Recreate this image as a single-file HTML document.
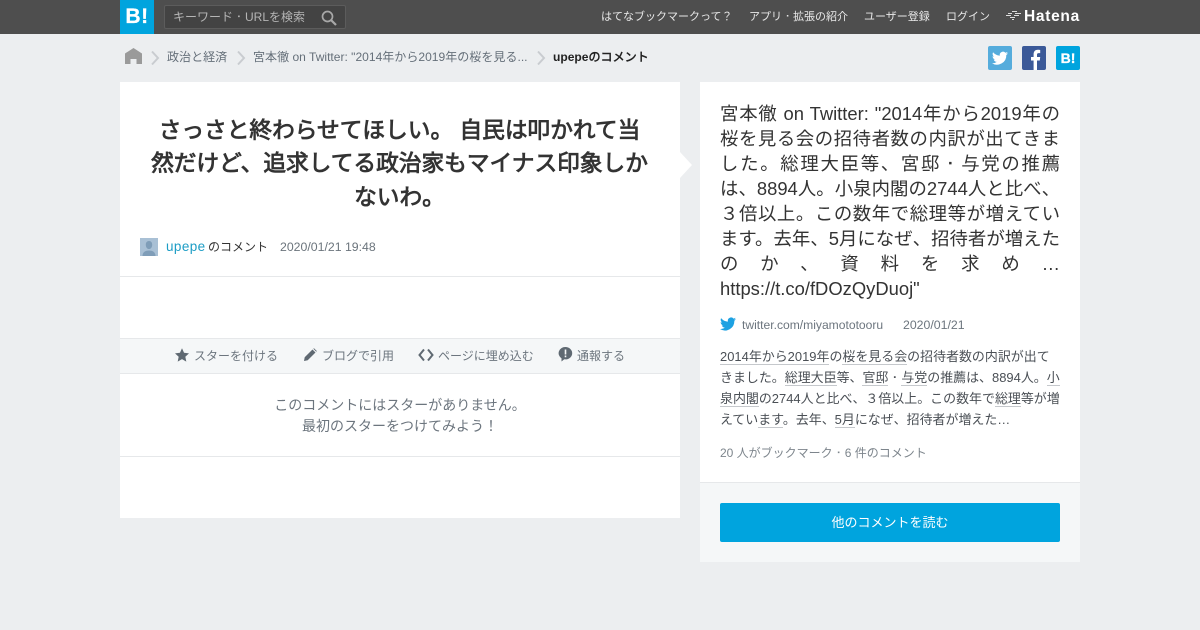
<!DOCTYPE html>
<html lang="ja"><head><meta charset="utf-8"><title>upepeのコメント</title>
<style>
*{box-sizing:border-box}
html,body{margin:0;padding:0}
body{width:1200px;height:630px;overflow:hidden;background:#eceef0;position:relative;font-family:"Liberation Sans","WenQuanYi Zen Hei",sans-serif;color:#333}
.a{position:absolute;white-space:nowrap}
.d{font-family:"IPAGothic",sans-serif;line-height:0}
#top{left:0;top:0;width:1200px;height:34px;background:#4e4e4e}
.nav{top:10px;font-size:11px;line-height:15px;color:#e8e8e8}
.bc{top:49px;font-size:12.050px;line-height:16px;color:#656f79}
.u{border-bottom:1px solid #c5c8cc}
.act{top:348px;font-size:12px;line-height:16px;color:#6c757e}
</style></head><body>
<div class="a" id="top"></div>
<div class="a" style="left:120px;top:0;width:34px;height:34px;background:#00a4de;color:#fff;font-weight:bold;font-size:21px;line-height:34px;text-align:center;letter-spacing:.5px;-webkit-text-stroke:.25px #fff">B!</div>
<div class="a" style="left:164px;top:5px;width:182px;height:24px;background:#434343;border:1px solid #5c5c5c;border-radius:2px"></div>
<div class="a" style="left:173px;top:9px;font-size:12px;line-height:16px;color:#b5b5b5">キーワード<span class="d">・</span>URLを検索</div>
<svg class="a" style="left:320px;top:9px" width="18" height="18" viewBox="0 0 18 18" fill="none" stroke="#a8a8a8" stroke-width="1.7"><circle cx="7.5" cy="7.5" r="5"/><path d="M11 11l5 5" stroke-width="2.2"/></svg>
<div class="a nav" style="left:601px">はてなブックマークって？</div>
<div class="a nav" style="left:749px">アプリ<span class="d">・</span>拡張の紹介</div>
<div class="a nav" style="left:864px">ユーザー登録</div>
<div class="a nav" style="left:946px">ログイン</div>
<svg class="a" style="left:1006px;top:10px" width="16" height="11" viewBox="0 0 16 11" fill="none" stroke="#ddd" stroke-width="1"><path d="M6 1.500h5M2 3.500h4M9 3.500h6M0 5.500h5M8 5.500h5M4 7.500h5M6 9.500h2"/></svg>
<div class="a" style="left:1024px;top:7px;font-size:15.500px;line-height:20px;font-weight:bold;color:#fff;letter-spacing:.7px">Hatena</div>

<svg class="a" style="left:125px;top:48px" width="17" height="16" viewBox="0 0 17 16" fill="#9a9a9a"><path d="M8.500 0L0 5.500V16h5.500v-5h6v5H17V5.500z"/></svg>
<svg class="a" style="left:150px;top:50px" width="10" height="16" viewBox="0 0 10 16" fill="none" stroke="#c9ccd0" stroke-width="2"><path d="M2 1.500l6 6.500-6 6.500"/></svg>
<div class="a bc" style="left:167px">政治と経済</div>
<svg class="a" style="left:236px;top:50px" width="10" height="16" viewBox="0 0 10 16" fill="none" stroke="#c9ccd0" stroke-width="2"><path d="M2 1.500l6 6.500-6 6.500"/></svg>
<div class="a bc" style="left:253px">宮本徹 on Twitter: "2014年から2019年の桜を見る...</div>
<svg class="a" style="left:536px;top:50px" width="10" height="16" viewBox="0 0 10 16" fill="none" stroke="#c9ccd0" stroke-width="2"><path d="M2 1.500l6 6.500-6 6.500"/></svg>
<div class="a bc" style="left:553px;font-weight:bold;color:#222">upepeのコメント</div>

<svg class="a" style="left:988px;top:46px" width="24" height="24" viewBox="0 0 24 24"><rect width="24" height="24" rx="2" fill="#55acdc"/><path fill="#fff" d="M20 7.200c-.6.300-1.200.400-1.900.500.700-.400 1.200-1 1.400-1.800-.600.400-1.300.600-2.100.800a3.300 3.300 0 0 0-5.600 3c-2.700-.100-5.100-1.400-6.700-3.400-.900 1.500-.400 3.400 1 4.400-.500 0-1-.200-1.500-.400 0 1.600 1.100 3 2.600 3.300-.500.100-1 .100-1.500 0 .400 1.300 1.600 2.200 3.100 2.300A6.600 6.600 0 0 1 4 17.200 9.300 9.300 0 0 0 18.300 9c.700-.500 1.300-1.100 1.700-1.800z"/></svg>
<svg class="a" style="left:1022px;top:46px" width="24" height="24" viewBox="0 0 24 24"><rect width="24" height="24" rx="2" fill="#3b5998"/><path fill="#fff" d="M15 24v-9.500h2.800l.4-3.500H15V8.800c0-1 .300-1.700 1.700-1.700h1.500V4c-.400 0-1.200-.200-2.400-.200-2.500 0-4.200 1.600-4.200 4.500V11H9v3.500h2.600V24z"/></svg>
<div class="a" style="left:1056px;top:46px;width:24px;height:24px;border-radius:2px;background:#00a4de;color:#fff;font-weight:bold;font-size:14px;line-height:24px;text-align:center;-webkit-text-stroke:.3px #fff">B!</div>

<div class="a" style="left:120px;top:82px;width:560px;height:436px;background:#fff"></div>
<div class="a" style="left:149.500px;top:113.500px;width:500px;white-space:normal;text-align:center;font-size:22.700px;line-height:33.500px;font-weight:bold;color:#333">さっさと終わらせてほしい。 自民は叩かれて当然だけど、追求してる政治家もマイナス印象しかないわ。</div>
<svg class="a" style="left:140px;top:238px" width="18" height="18" viewBox="0 0 18 18"><rect width="18" height="18" fill="#a9c0d5"/><path fill="#7f9db8" d="M9 3c2 0 3.200 1.500 3.200 3.700S11 11 9 11 5.800 8.900 5.800 6.700 7 3 9 3zM2.500 18c0-3.500 2.500-5.500 6.500-5.500s6.500 2 6.500 5.500z"/></svg>
<div class="a" style="left:166px;top:239px;font-size:13.500px;line-height:16px;color:#1d9dc5;letter-spacing:.4px">upepe</div>
<div class="a" style="left:208px;top:239px;font-size:12px;line-height:16px;color:#333">のコメント</div>
<div class="a" style="left:280px;top:239px;font-size:12.300px;line-height:16px;color:#6b747c">2020/01/21 19:48</div>
<div class="a" style="left:120px;top:276px;width:560px;height:1px;background:#e6e8ea"></div>
<div class="a" style="left:120px;top:338px;width:560px;height:36px;background:#f5f7f8;border-top:1px solid #e6e8ea;border-bottom:1px solid #e6e8ea"></div>
<svg class="a" style="left:175px;top:348px" width="14" height="14" viewBox="0 0 24 24" fill="#5f6972"><path d="M12 .5l3.500 7.700 8.500 1-6.300 5.700 1.700 8.400L12 19.100l-7.400 4.200 1.700-8.400L0 9.200l8.500-1z"/></svg>
<div class="a act" style="left:194px">スターを付ける</div>
<svg class="a" style="left:303px;top:348px" width="14" height="14" viewBox="0 0 14 14" fill="#5f6972"><path d="M1 13l.700-3.700L9.500 1.500l3 3-7.800 7.800zM10.300.7l.700-.500 2.800 2.800-.500.700z"/></svg>
<div class="a act" style="left:322px">ブログで引用</div>
<svg class="a" style="left:418px;top:348px" width="16" height="14" viewBox="0 0 16 14" fill="none" stroke="#5f6972" stroke-width="2"><path d="M6 1.500L1.500 7 6 12.500M10 1.500L14.500 7 10 12.500"/></svg>
<div class="a act" style="left:438px">ページに埋め込む</div>
<svg class="a" style="left:558px;top:347px" width="15" height="15" viewBox="0 0 15 15"><path fill="#5f6972" d="M7.500 0a6.700 6.200 0 0 1 0 12.400c-.400 0-.800 0-1.200-.100L3.500 14.500V11.300A6.700 6.200 0 0 1 7.500 0z"/><path fill="#f5f7f8" d="M6.700 2.500h1.600v5H6.700zM6.700 8.500h1.600v1.700H6.700z"/></svg>
<div class="a act" style="left:577px">通報する</div>
<div class="a" style="left:120px;top:395px;width:560px;text-align:center;font-size:14px;line-height:21px;color:#6c757e">このコメントにはスターがありません。<br>最初のスターをつけてみよう！</div>
<div class="a" style="left:120px;top:456px;width:560px;height:1px;background:#e6e8ea"></div>

<div class="a" style="left:700px;top:82px;width:380px;height:400px;background:#fff"></div>
<svg class="a" style="left:680px;top:152px" width="12" height="26" viewBox="0 0 12 26"><path fill="#fff" d="M0 0l12 13L0 26z"/></svg>
<div class="a" style="left:720px;top:101px;width:340px;white-space:normal;text-align:justify;font-size:18.400px;line-height:25px;color:#333">宮本徹 on Twitter: "2014年から2019年の桜を見る会の招待者数の内訳が出てきました。総理大臣等、宮邸<span class="d">・</span>与党の推薦は、8894人。小泉内閣の2744人と比べ、３倍以上。この数年で総理等が増えています。去年、5月になぜ、招待者が増えたのか、資料を求め… https://t.co/fDOzQyDuoj"</div>
<svg class="a" style="left:720px;top:316px" width="16" height="16" viewBox="0 0 24 24"><path fill="#1da1e2" d="M24 4.600c-.900.400-1.800.700-2.800.800 1-.600 1.800-1.600 2.200-2.700-1 .600-2 1-3.100 1.200a4.900 4.900 0 0 0-8.400 4.500C7.700 8.100 4.100 6.100 1.700 3.100a4.900 4.900 0 0 0 1.500 6.600c-.800 0-1.600-.200-2.200-.600 0 2.400 1.700 4.400 3.900 4.900-.700.200-1.500.200-2.200.100.600 1.900 2.400 3.300 4.600 3.400A9.900 9.900 0 0 1 0 19.500 14 14 0 0 0 21.500 7.100c1-.700 1.800-1.500 2.500-2.500z"/></svg>
<div class="a" style="left:742px;top:317px;font-size:12.100px;line-height:16px;color:#6c757e">twitter.com/miyamototooru</div>
<div class="a" style="left:903px;top:317px;font-size:12.300px;line-height:16px;color:#6c757e">2020/01/21</div>
<div class="a" style="left:720px;top:346px;width:340px;white-space:normal;font-size:12.960px;line-height:21px;color:#4a4f55"><span class="u">2014年から2019年</span>の<span class="u">桜を見る会</span>の招待者数の内訳が出てきました。<span class="u">総理大臣</span>等、<span class="u">官邸</span><span class="d">・</span><span class="u">与党</span>の推薦は、8894人。<span class="u">小泉内閣</span>の2744人と比べ、３倍以上。この数年で<span class="u">総理</span>等が増えてい<span class="u">ます</span>。去年、<span class="u">5月</span>になぜ、招待者が増えた…</div>
<div class="a" style="left:720px;top:445px;font-size:12px;line-height:16px;color:#7d858c">20 人がブックマーク<span class="d">・</span>6 件のコメント</div>
<div class="a" style="left:700px;top:482px;width:380px;height:80px;background:#f5f7f8;border-top:1px solid #e6e8ea"></div>
<div class="a" style="left:720px;top:503px;width:340px;height:39px;background:#00a4de;border-radius:2px;color:#fff;font-size:13px;line-height:39px;text-align:center">他のコメントを読む</div>
</body></html>
